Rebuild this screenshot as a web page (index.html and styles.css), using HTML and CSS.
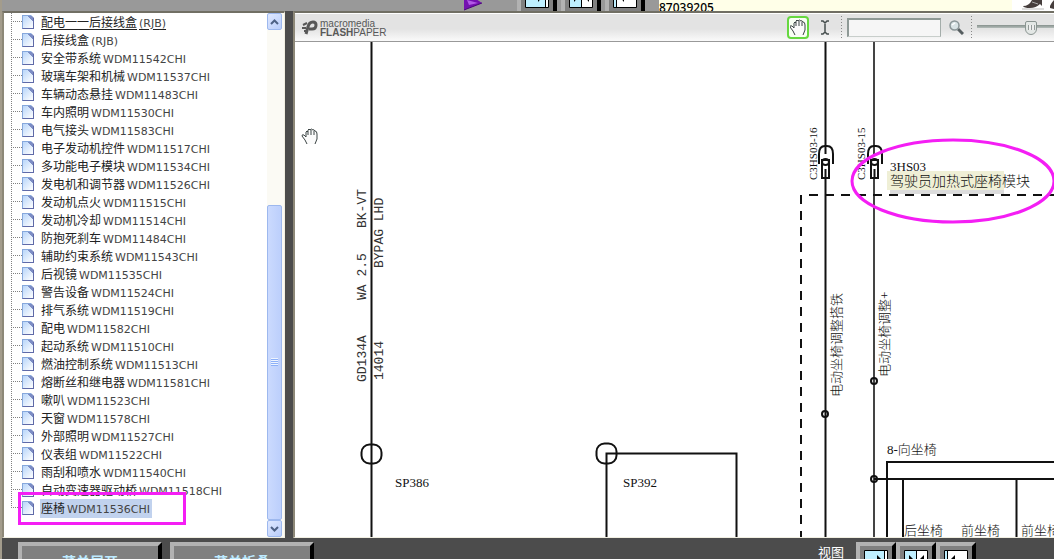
FILE: index.html
```html
<!DOCTYPE html>
<html lang="zh-CN">
<head>
<meta charset="UTF-8">
<meta name="viewport" content="width=device-width, initial-scale=1.0">
<title>电路图</title>
<link rel="stylesheet" href="styles.css">
</head>
<body>
<div class="app">
  <header class="topbar">
    <svg class="play-icon" width="18" height="20" viewBox="0 0 18 20">
      <path d="M0 0L18 12L0 19z" fill="#7410b0"/>
      <path d="M3 9L14 12L5 14z" fill="#b25be6"/>
      <path d="M0 19L18 12" stroke="#4a0878"/>
    </svg>
    <div class="view-buttons top-views">
      <button class="bevel icon-btn" aria-label="左视图">
        <svg width="24" height="24"><path d="M.5.5h23v23H.5z" fill="#fff" stroke="#000"/><path d="M1 1h19v22H1z" fill="#bfefff"/><path d="M20.500 1v22" stroke="#000"/><path d="M4 10h9V5l6 6-6 7v-5H4z"/></svg>
      </button>
      <button class="bevel icon-btn" aria-label="双视图">
        <svg width="24" height="24"><path d="M.5.5h23v23H.5z" fill="#fff" stroke="#000"/><path d="M1 1h11v22H1z" fill="#bfefff"/><path d="M12.500 1v22" stroke="#000"/><path d="M2 10h3V5l6 6-6 7v-5H2zM23 10h-3V5l-6 6 6 7v-5h3z"/></svg>
      </button>
      <button class="bevel icon-btn" aria-label="右视图">
        <svg width="24" height="24"><path d="M.5.5h23v23H.5z" fill="#fff" stroke="#000"/><path d="M1 1h2v22H1z" fill="#bfefff"/><path d="M3.500 1v22" stroke="#000"/><path d="M20 10h-9V5l-6 6 6 7v-5h9z"/></svg>
      </button>
    </div>
    <div class="part-no">87039205</div>
    <div class="photo">
      <svg width="42" height="11" viewBox="0 0 42 11">
        <path d="M11 6Q17 6 20 0H30V6L28 4Q24 8 18 8Q12 8 11 6z" fill="#463e3d"/>
        <path d="M38 6Q40 2 42 0V9L38 8z" fill="#463e3d"/>
        <path d="M10 9h22" stroke="#bbb"/>
        <path d="M20 2l6 2" stroke="#aaa"/>
      </svg>
    </div>
  </header>

  <main class="panes">
    <nav class="pane tree-pane">
      <ul class="tree">
        <li><a class="hover" href="#">配电一一后接线盒<span>(RJB)</span></a></li>
        <li><a href="#">后接线盒<span>(RJB)</span></a></li>
        <li><a href="#">安全带系统<span>WDM11542CHI</span></a></li>
        <li><a href="#">玻璃车架和机械<span>WDM11537CHI</span></a></li>
        <li><a href="#">车辆动态悬挂<span>WDM11483CHI</span></a></li>
        <li><a href="#">车内照明<span>WDM11530CHI</span></a></li>
        <li><a href="#">电气接头<span>WDM11583CHI</span></a></li>
        <li><a href="#">电子发动机控件<span>WDM11517CHI</span></a></li>
        <li><a href="#">多功能电子模块<span>WDM11534CHI</span></a></li>
        <li><a href="#">发电机和调节器<span>WDM11526CHI</span></a></li>
        <li><a href="#">发动机点火<span>WDM11515CHI</span></a></li>
        <li><a href="#">发动机冷却<span>WDM11514CHI</span></a></li>
        <li><a href="#">防抱死刹车<span>WDM11484CHI</span></a></li>
        <li><a href="#">辅助约束系统<span>WDM11543CHI</span></a></li>
        <li><a href="#">后视镜<span>WDM11535CHI</span></a></li>
        <li><a href="#">警告设备<span>WDM11524CHI</span></a></li>
        <li><a href="#">排气系统<span>WDM11519CHI</span></a></li>
        <li><a href="#">配电<span>WDM11582CHI</span></a></li>
        <li><a href="#">起动系统<span>WDM11510CHI</span></a></li>
        <li><a href="#">燃油控制系统<span>WDM11513CHI</span></a></li>
        <li><a href="#">熔断丝和继电器<span>WDM11581CHI</span></a></li>
        <li><a href="#">嗽叭<span>WDM11523CHI</span></a></li>
        <li><a href="#">天窗<span>WDM11578CHI</span></a></li>
        <li><a href="#">外部照明<span>WDM11527CHI</span></a></li>
        <li><a href="#">仪表组<span>WDM11522CHI</span></a></li>
        <li><a href="#">雨刮和喷水<span>WDM11540CHI</span></a></li>
        <li><a href="#">自动变速器驱动桥<span>WDM11518CHI</span></a></li>
        <li class="marked"><a class="selected" href="#">座椅<span>WDM11536CHI</span></a></li>
      </ul>
      <div class="scrollbar">
        <button class="scroll-btn" aria-label="向上"><svg width="9" height="6"><path d="M1 5l3.500-3.500L8 5" fill="none" stroke="#4d6185" stroke-width="2"/></svg></button>
        <div class="scroll-track"></div>
        <div class="scroll-thumb"><i></i></div>
        <button class="scroll-btn" aria-label="向下"><svg width="9" height="6"><path d="M1 1l3.500 3.500L8 1" fill="none" stroke="#4d6185" stroke-width="2"/></svg></button>
      </div>
    </nav>

    <section class="pane paper">
      <div class="toolbar">
        <div class="brand">
          <svg width="16" height="15" viewBox="0 0 16 15" fill="none" stroke="#585858">
            <path d="M4 14L6 7Q7 2 11 2Q14 2 14 5Q14 9 10 9H7" stroke-width="3"/>
            <path d="M1 5L5 3" stroke-width="2"/>
            <path d="M0 8h4M2 11h2" stroke-width="2"/>
          </svg>
          <div class="brand-name">
            <div>macromedia</div>
            <div><b>FLASH</b>PAPER</div>
          </div>
        </div>
        <button class="tool active" aria-label="手形工具">
          <svg width="16" height="17"><use href="#hand"/></svg>
        </button>
        <button class="tool" aria-label="选择文本">
          <svg width="8" height="15"><path d="M0 1h2l2 2 2-2h2M4 2v11M0 14h2l2-2 2 2h2" fill="none" stroke="#454d4d" stroke-width="1.500"/></svg>
        </button>
        <div class="sep"></div>
        <input class="search" type="text" aria-label="查找">
        <button class="tool find" aria-label="查找下一个">
          <svg width="15" height="15"><path d="M9 9l5 5" stroke="#565e60" stroke-width="3"/><circle cx="5.500" cy="5.500" r="4.500" fill="#d9e3e5" stroke="#8a9597" stroke-width="1.500"/><path d="M3 5l3-2" stroke="#fff" stroke-width="1.500"/></svg>
        </button>
        <div class="sep"></div>
        <input class="zoom" type="range" min="0" max="100" value="74" aria-label="缩放">
      </div>

      <div class="canvas">
        <svg class="diagram" width="1200" height="900" viewBox="295 42 1200 900">
          <defs>
            <g id="hand">
              <path d="M5 16L3 12L0 8Q0 6 2 7L4 9V4Q5 2 6 4V2Q7 0 8 2Q9 0 11 2Q12 1 13 3Q15 3 15 6V11L13 16" fill="#fbfbfb" stroke="#3b4444" stroke-linejoin="round"/>
              <path d="M6 4V7M9 2V7M12 3V7" fill="none" stroke="#3b4444"/>
            </g>
            <g id="plug" fill="none" stroke="#111" stroke-width="2">
              <path d="M-6 19V9Q-6 1 0 1H2Q8 1 8 9V19"/>
              <rect x="-3" y="15" width="7" height="18"/>
              <ellipse cx="0.500" cy="17" rx="3.500" ry="3"/>
              <path d="M0.500 24V33"/>
            </g>
          </defs>

          <!-- 导线 -->
          <g class="wire">
            <path d="M371.500 42V942"/>
            <path d="M825.500 42V154M825.500 179V942"/>
            <path class="gray" d="M874 42V154M874 179V942"/>
            <path d="M606.500 942V453.500H736.500V942"/>
            <path d="M887 942V462H1495"/>
            <path d="M874 479H1495M903 479V942M1016.500 479V942"/>
            <path class="dash" d="M801 195V942"/>
            <path class="dash" d="M809 195H1495"/>
          </g>

          <!-- 接点 -->
          <g class="node">
            <rect x="361.500" y="444.500" width="20" height="19" rx="8"/>
            <rect x="596.500" y="443.500" width="20" height="20" rx="8"/>
            <circle cx="825" cy="414" r="3"/>
            <circle cx="874" cy="381" r="3"/>
            <circle cx="874" cy="479" r="3"/>
          </g>
          <use href="#plug" x="825" y="145"/>
          <use href="#plug" x="874" y="145"/>

          <rect x="890" y="174" width="114" height="20" fill="#dcdcdc"/>
          <rect x="887" y="171" width="117" height="19" fill="#efefd6"/>

          <g class="mono">
            <text transform="translate(366 228) rotate(-90)">BK-VT</text>
            <text transform="translate(366 300) rotate(-90)">WA 2.5</text>
            <text transform="translate(366 382) rotate(-90)">GD134A</text>
            <text transform="translate(383 268) rotate(-90)">BYPAG LHD</text>
            <text transform="translate(383 380) rotate(-90)">14014</text>
          </g>
          <g class="label">
            <text x="395" y="487">SP386</text>
            <text x="623" y="487">SP392</text>
            <text x="890" y="171">3HS03</text>
            <text class="title" x="890" y="186">驾驶员加热式座椅模块</text>
            <text x="887" y="454">8-向坐椅</text>
            <text x="904" y="535">后坐椅</text>
            <text x="961" y="535">前坐椅</text>
            <text x="1021" y="535">前坐椅</text>
            <text transform="translate(841 397) rotate(-90)">电动坐椅调整搭铁</text>
            <text transform="translate(889 377) rotate(-90)">电动坐椅调整+</text>
            <text class="pin" transform="translate(817 180) rotate(-90)">C3HS03-16</text>
            <text class="pin" transform="translate(865 180) rotate(-90)">C3HS03-15</text>
          </g>

          <ellipse cx="953" cy="181" rx="101" ry="41" fill="none" stroke="#f41ef4" stroke-width="3"/>
          <use href="#hand" x="302" y="128"/>
        </svg>
      </div>
    </section>
  </main>

  <footer class="bottombar">
    <button class="bevel text-btn">菜单展开</button>
    <button class="bevel text-btn">菜单折叠</button>
    <div class="views">
      <span class="views-label">视图</span>
      <div class="view-buttons">
        <button class="bevel icon-btn" aria-label="左视图">
          <svg width="24" height="24"><path d="M.5.5h23v23H.5z" fill="#fff" stroke="#000"/><path d="M1 1h19v22H1z" fill="#bfefff"/><path d="M20.500 1v22" stroke="#000"/><path d="M4 10h9V5l6 6-6 7v-5H4z"/></svg>
        </button>
        <button class="bevel icon-btn" aria-label="双视图">
          <svg width="24" height="24"><path d="M.5.5h23v23H.5z" fill="#fff" stroke="#000"/><path d="M1 1h11v22H1z" fill="#bfefff"/><path d="M12.500 1v22" stroke="#000"/><path d="M2 10h3V5l6 6-6 7v-5H2zM23 10h-3V5l-6 6 6 7v-5h3z"/></svg>
        </button>
        <button class="bevel icon-btn" aria-label="右视图">
          <svg width="24" height="24"><path d="M.5.5h23v23H.5z" fill="#fff" stroke="#000"/><path d="M1 1h2v22H1z" fill="#bfefff"/><path d="M3.500 1v22" stroke="#000"/><path d="M20 10h-9V5l-6 6 6 7v-5h9z"/></svg>
        </button>
      </div>
    </div>
  </footer>
</div>
</body>
</html>
```
FILE: styles.css
```css
*, *::before, *::after {
  box-sizing: border-box;
}
body {
  margin: 0;
  font-family: "Noto Sans CJK SC", sans-serif;
  font-size: 12px;
  background: #4c4c4c;
}
button {
  padding: 0;
  border: 0;
  background: none;
  font-family: inherit;
}
svg {
  display: block;
  flex: none;
}
.app {
  display: flex;
  flex-direction: column;
  height: 100vh;
  overflow: hidden;
  border-left: 2px solid #a39c8c;
}

/* 顶部 */
.topbar {
  display: flex;
  align-items: flex-end;
  flex: none;
  height: 11px;
  padding-left: 462px;
  background: #999;
  overflow: hidden;
}
.play-icon {
  margin-right: 35px;
}
.view-buttons {
  display: flex;
}
.top-views {
  align-items: flex-end;
  gap: 4px;
  margin-right: 14px;
}
.top-views .bevel {
  border-bottom: 0;
  height: 31px;
  align-items: flex-start;
}
.bevel {
  display: flex;
  flex: none;
  justify-content: center;
  border: 4px solid;
  border-color: #b2b2b2 #000 #000 #b2b2b2;
  background: #808080;
}
.icon-btn {
  width: 40px;
  height: 40px;
  align-items: center;
}
.part-no {
  flex: 1;
  height: 11px;
  background: #ffffe8;
  color: #000;
  font-family: "Noto Sans", sans-serif;
  font-weight: 500;
  line-height: 15px;
}
.photo {
  width: 42px;
  height: 11px;
  background: #fff;
}

/* 主区域 */
.panes {
  display: flex;
  flex: 1;
  gap: 8px;
  min-height: 0;
  background: #4c4c4c;
}
.pane {
  border: 1px solid;
  border-width: 2px 1px 1px 2px;
  border-color: #716f64 #f1efe2 #f1efe2 #8d8878;
  background: #fff;
  overflow: hidden;
}
.tree-pane {
  display: flex;
  flex: none;
  width: 283px;
}
.tree {
  flex: 1;
  margin: 0;
  padding: 0;
  list-style: none;
}
.tree li {
  display: flex;
  align-items: center;
  position: relative;
  height: 18px;
  padding-left: 18px;
  background:
    repeating-linear-gradient(to bottom, #808080 0 1px, transparent 1px 2px) 7px 0 / 1px 100% no-repeat,
    repeating-linear-gradient(to right, #808080 0 1px, transparent 1px 2px) 9px 8px / 9px 1px no-repeat;
}
.tree li:last-child {
  background-size: 1px 50%, 9px 1px;
}
.tree li::before {
  content: '';
  width: 12px;
  height: 14px;
  margin-right: 6px;
  border: 1px solid;
  border-color: #86a8dc #5f6aa8 #5f6aa8 #86a8dc;
  background: linear-gradient(225deg, #7c8cc4 4px, transparent 4px), linear-gradient(135deg, #b9d6fa, #fff);
  clip-path: polygon(0 0, 9px 0, 12px 3px, 12px 14px, 0 14px);
}
.tree a {
  padding: 0 2px 0 1px;
  color: #222;
  line-height: 17px;
  text-decoration: none;
  white-space: nowrap;
}
.tree a span {
  padding-left: 2px;
  font-family: "DejaVu Sans", sans-serif;
  font-size: 11px;
  color: #444;
}
.tree a.hover {
  text-decoration: underline;
  text-underline-offset: 2px;
}
.tree a.selected {
  background: #c1d2ee;
}
/* 标注框 */
.marked::after {
  content: '';
  position: absolute;
  left: 14px;
  top: -7px;
  width: 168px;
  height: 33px;
  border: 3px solid #f41ef4;
}

.scrollbar {
  display: flex;
  flex-direction: column;
  width: 17px;
  padding-right: 2px;
  background: #fbfaf4;
}
.scroll-btn {
  display: flex;
  flex: none;
  align-items: center;
  justify-content: center;
  width: 15px;
  height: 17px;
  border: 1px solid #9db8ee;
  border-radius: 2px;
  background: linear-gradient(135deg, #dfe8ff, #b9cdfa);
}
.scroll-track {
  flex: 175;
}
.scroll-thumb {
  display: flex;
  flex: 314;
  align-items: center;
  justify-content: center;
  border: 1px solid #9db8ee;
  border-radius: 2px;
  background: linear-gradient(to right, #cbdafe, #bccffc);
}
.scroll-thumb i {
  width: 7px;
  height: 8px;
  background: repeating-linear-gradient(to bottom, #eef4fe 0 1px, #8cb0f8 1px 2px);
}

/* FlashPaper */
.paper {
  display: flex;
  flex: 1;
  flex-direction: column;
  min-width: 0;
  border-right: 0;
}
.toolbar {
  display: flex;
  align-items: center;
  flex: none;
  height: 29px;
  border-top: 1px solid #fff;
  border-bottom: 1px solid #999;
  background: linear-gradient(to bottom, #e3e3e3 55%, #fafafa);
}
.brand {
  display: flex;
  flex: 1;
  align-items: center;
  gap: 2px;
  padding-left: 7px;
}
.brand-name {
  font-family: "Liberation Sans", sans-serif;
  font-size: 10px;
  line-height: 9px;
  color: #585858;
}
.tool {
  display: flex;
  align-items: center;
  justify-content: center;
  width: 32px;
  height: 23px;
}
.tool.active {
  width: 22px;
  border: 2px solid #66d840;
  border-radius: 4px;
  background: #f8fff4;
}
.sep {
  width: 1px;
  height: 23px;
  background: repeating-linear-gradient(to bottom, #888 0 1px, transparent 1px 3px);
}
.search {
  width: 94px;
  height: 19px;
  margin-left: 5px;
  padding: 0 4px;
  border: 1px solid;
  border-width: 2px 1px 1px 2px;
  border-color: #8e9996 #a4adaa #c8cecb #8e9996;
  background: #f6f6f6;
  font-size: 12px;
}
.find {
  width: 30px;
}
.zoom {
  width: 77px;
  height: 16px;
  margin: 0 0 0 5px;
  appearance: none;
  background: linear-gradient(to bottom, #86918d, #b4bcb9) 0 5px / 100% 3px no-repeat;
}
.zoom::-webkit-slider-thumb {
  appearance: none;
  width: 12px;
  height: 14px;
  background: repeating-linear-gradient(to right, #929a98 0 1px, #eee 1px 3px) 2px 3px / 7px 5px no-repeat, #e3e7e5;
  border: 1px solid #8b9592;
  border-radius: 2px 2px 6px 6px;
}
.canvas {
  flex: 1;
  min-height: 0;
  overflow: hidden;
}
.wire {
  fill: none;
  stroke: #111;
  stroke-width: 2;
}
.wire .gray {
  stroke: #444;
}
.wire .dash {
  stroke-dasharray: 9 7;
}
.node {
  fill: none;
  stroke: #111;
  stroke-width: 2;
}
.mono {
  font-family: "Liberation Mono", monospace;
  font-size: 13px;
  fill: #333;
}
.label {
  font-family: "Liberation Serif", "Noto Sans CJK SC", serif;
  font-size: 13px;
  font-weight: 300;
  fill: #111;
}
.label .title {
  font-size: 14px;
}
.label .pin {
  font-size: 11px;
}

/* 底部 */
.bottombar {
  display: flex;
  flex: none;
  gap: 8px;
  height: 21px;
  padding: 4px 78px 0 16px;
  background: #4c4c4c;
  overflow: hidden;
}
.text-btn {
  width: 144px;
  height: 36px;
  padding-top: 4px;
  font-size: 14px;
  font-weight: 700;
  line-height: 22px;
  color: #bdeaff;
}
.views {
  display: flex;
  gap: 12px;
  margin-left: auto;
}
.views-label {
  font-size: 13px;
  line-height: 20px;
  color: #fff;
}
```
